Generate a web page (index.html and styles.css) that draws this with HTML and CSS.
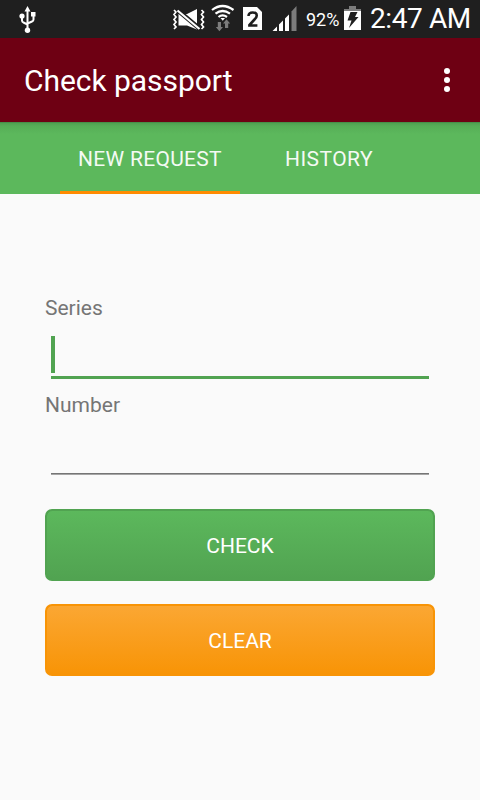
FILE: index.html
```
<!DOCTYPE html>
<html lang="en">
<head>
<meta charset="utf-8">
<title>Check passport</title>
<link rel="stylesheet" href="styles.css">
</head>
<body>
<div class="status">
  <svg class="usb" width="18" height="38" viewBox="19 0 18 38" fill="none" stroke="#fff" stroke-width="2">
    <path d="M27.5 10v20M22 17v3.500q0 1.500 1.500 2l4 2M33.500 15v4.500q0 1.500-1.500 2l-4.500 2"/>
    <g fill="#fff" stroke="none"><path d="M27.500 6l3 5.500h-6zM31 12h4.500v4.500H31z"/><circle cx="22" cy="16" r="2.600"/><circle cx="27.500" cy="30.200" r="2.700"/></g>
  </svg>
  <svg class="mute" width="33" height="38" viewBox="172 0 33 38" fill="none">
    <path d="M174 10l2 2-2 2.500 2 2.500-2 2.500 2 2.500-2 2.500 2 2.500-2 2M201.500 10l2 2-2 2.500 2 2.500-2 2.500 2 2.500-2 2.500 2 2.500-2 2" stroke="#fff" stroke-width="1.700"/>
    <path d="M178.500 14h8.500l10-5v20.500l-10-4h-8.500z" fill="#fff"/>
    <path d="M178 10.500l22 18.500" stroke="#1f1f1f" stroke-width="4.600"/>
    <path d="M177.500 10.500l22 18.500" stroke="#fff" stroke-width="2.200"/>
  </svg>
  <svg class="wifi" width="24" height="38" viewBox="211 0 24 38" fill="none">
    <path d="M212 10q10.500-8 21.500 0M215.500 13.700q7-5.400 14.500 0M218.500 17q4-3.300 8.500 0" stroke="#fff" stroke-width="2.200"/>
    <path d="M220.500 18h4.500l-2.250 2.700z" fill="#fff"/>
    <path d="M217.800 22h3.200v5h2l-3.600 4.200-3.600-4.200h2zM225 28v-4.500h-2l3.500-4.200 3.700 4.200h-2v4.500z" fill="#7c7c7c"/>
  </svg>
  <svg class="sim" width="19" height="38" viewBox="243 0 19 38">
    <path d="M243 7h14l5 5v18h-19z" fill="#fff"/>
    <path d="M248.500 16q0-3.500 4.200-3.500t4 3.300q0 1.700-2 3.500l-5.300 5.700v.5h8" fill="none" stroke="#1f1f1f" stroke-width="2.600"/>
  </svg>
  <svg class="signal" width="25" height="38" viewBox="272 0 25 38">
    <path d="M272.500 31l4.500-4.500V31zM279 24.500l4-4V31h-4zM285 18.500l4-4V31h-4z" fill="#fff"/>
    <path d="M291.500 11.500l5-5.500V31h-5z" fill="#7c7c7c"/>
  </svg>
  <span class="percent">92%</span>
  <svg class="battery" width="17" height="38" viewBox="344 0 17 38">
    <path d="M349 6h7v3h5v2h-17V9h5z" fill="#7c7c7c"/><path d="M344 11h17v19h-17z" fill="#fff"/>
    <path d="M350.500 12h7l-2.500 5h3.500l-9.500 11 2.500-7.500h-4z" fill="#1f1f1f"/>
  </svg>
  <span class="clock">2:47 AM</span>
</div>
<header class="toolbar">
  <h1>Check passport</h1>
  <svg width="6" height="26" viewBox="0 0 6 26" fill="#fff"><circle cx="3" cy="4" r="3"/><circle cx="3" cy="13" r="3"/><circle cx="3" cy="22" r="3"/></svg>
</header>
<nav class="tabs"><a class="tab active">NEW REQUEST</a><a class="tab">HISTORY</a></nav>
<main class="form">
  <label>Series</label>
  <div class="field focused"><i class="cursor"></i></div>
  <label>Number</label>
  <div class="field"></div>
  <button class="check">CHECK</button>
  <button class="clear">CLEAR</button>
</main>
</body>
</html>
```

FILE: styles.css
```
* { box-sizing: border-box; }
body { margin: 0; width: 480px; height: 800px; overflow: hidden; background: #fafafa; font-family: Roboto, sans-serif; }
svg { display: block; flex: none; }
.status { display: flex; height: 38px; background: #1f1f1f; color: #fff; padding-left: 19px; line-height: 38px; white-space: nowrap; }
.mute { margin-left: 135px; }
.wifi { margin-left: 6px; }
.sim { margin-left: 8px; }
.signal { margin-left: 10px; }
.percent { width: 38px; margin-left: 9px; font-size: 18px; line-height: 40px; }
.clock { margin-left: 9px; font-size: 28px; letter-spacing: -0.4px; }
.toolbar { display: flex; align-items: center; justify-content: space-between; height: 84px; padding: 0 30px 0 24px; background: #6e0013; color: #fff; }
.toolbar h1 { margin: 0; font-size: 30px; line-height: 84px; padding-top: 2px; font-weight: 400; letter-spacing: -0.05px; }
.tabs { display: flex; height: 72px; padding-left: 60px; background: linear-gradient(#3f7f40 0, #509f50 1px, #56ad57 4px, #5cb85c 12px); }
.tab { height: 72px; padding: 0 18px; color: #f4faf4; font-size: 21px; line-height: 75px; letter-spacing: 0.3px; white-space: nowrap; }
.tab.active { width: 180px; border-bottom: 3px solid #ff8a00; }
.tab + .tab { padding-left: 45px; letter-spacing: 0.45px; }
.form { padding: 101px 45px 0; }
label { display: block; height: 25px; font-size: 21px; line-height: 27px; color: #757575; }
.field { height: 58px; margin: 0 6px; padding-top: 16px; background: linear-gradient(#757575, #757575) 0 56px / 100% 1px no-repeat, linear-gradient(#a5a5a5, #a5a5a5) 0 57px / 100% 1px no-repeat; }
.focused { height: 59px; margin-bottom: 13px; background: none; border-bottom: 3px solid #51a351; }
.cursor { display: block; width: 4px; height: 37px; background: #51a351; }
button { display: block; width: 390px; height: 72px; margin: 0 0 23px; padding: 0; border: 2px solid #51a351; border-radius: 7px; background: linear-gradient(#5cb85c, #51a351) padding-box, #51a351 border-box; color: #fff; font: 21px/70px Roboto, sans-serif; }
.check { margin-top: 34px; }
.clear { border-color: #f89406; background: linear-gradient(#fba733, #f89406) padding-box, #f89406 border-box; }
```
